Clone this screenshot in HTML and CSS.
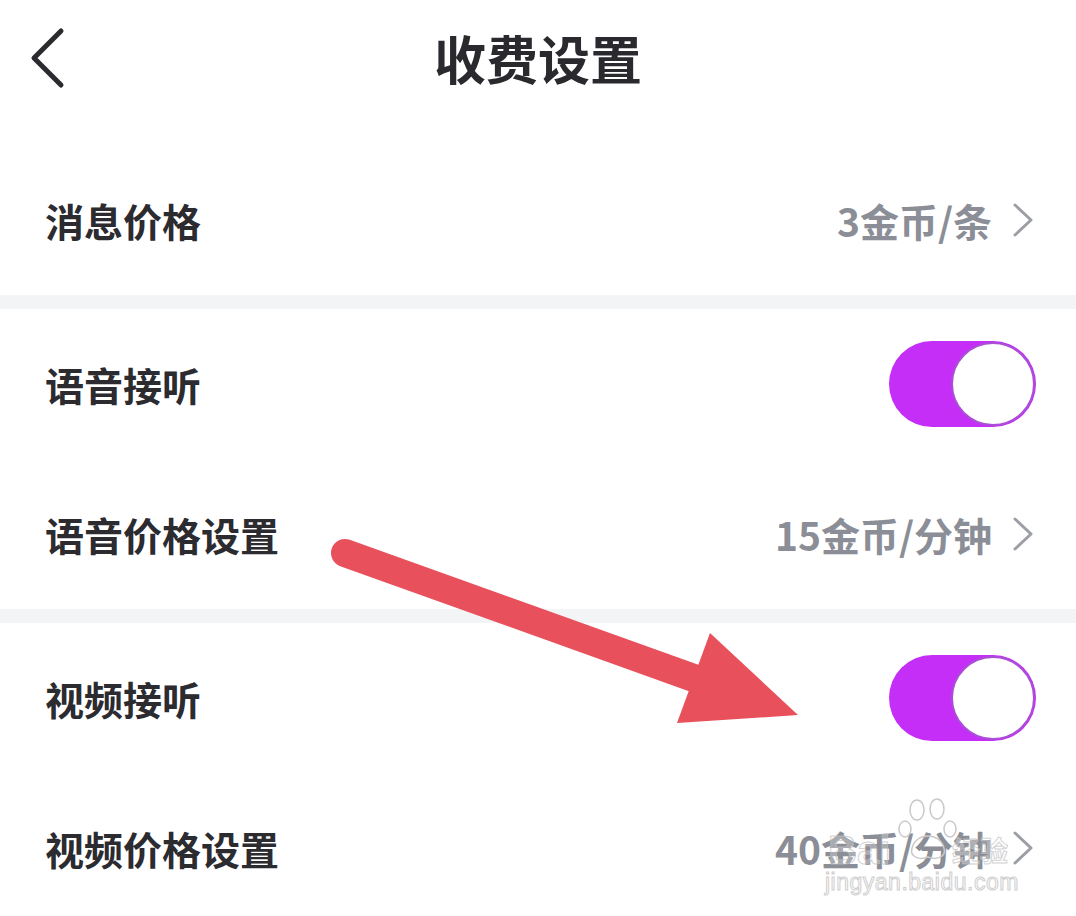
FILE: index.html
```html
<!DOCTYPE html>
<html lang="zh-CN">
<head>
<meta charset="utf-8">
<title>收费设置</title>
<link rel="stylesheet" href="styles.css">
</head>
<body>
<div class="page">
  <header class="topbar">
    <div class="back">
      <svg width="40" height="64" viewBox="0 0 40 64" aria-hidden="true">
        <polyline points="31,5 4,32 31,59" fill="none" stroke="#2b2b2f" stroke-width="5" stroke-linecap="round" stroke-linejoin="round"/>
      </svg>
    </div>
    <h1 class="title">收费设置</h1>
    <div></div>
  </header>

  <section class="group">
    <div class="row">
      <span class="label">消息价格</span>
      <span class="value">3金币/条<svg class="chev" width="22" height="36" viewBox="0 0 22 36"><polyline points="3,3 19,18 3,33" fill="none" stroke="#9c9ea5" stroke-width="3" stroke-linecap="round" stroke-linejoin="round"/></svg></span>
    </div>
  </section>
  <div class="divider"></div>

  <section class="group">
    <div class="row">
      <span class="label">语音接听</span>
      <span class="toggle"><span class="knob"></span></span>
    </div>
    <div class="row">
      <span class="label">语音价格设置</span>
      <span class="value">15金币/分钟<svg class="chev" width="22" height="36" viewBox="0 0 22 36"><polyline points="3,3 19,18 3,33" fill="none" stroke="#9c9ea5" stroke-width="3" stroke-linecap="round" stroke-linejoin="round"/></svg></span>
    </div>
  </section>
  <div class="divider"></div>

  <section class="group">
    <div class="row">
      <span class="label">视频接听</span>
      <span class="toggle"><span class="knob"></span></span>
    </div>
    <div class="row">
      <span class="label">视频价格设置</span>
      <span class="value">40金币/分钟<svg class="chev" width="22" height="36" viewBox="0 0 22 36"><polyline points="3,3 19,18 3,33" fill="none" stroke="#9c9ea5" stroke-width="3" stroke-linecap="round" stroke-linejoin="round"/></svg></span>
    </div>
  </section>

  <svg class="annot" width="1076" height="916" viewBox="0 0 1076 916" aria-hidden="true">
    <line x1="345" y1="553" x2="702" y2="681" stroke="#e8505c" stroke-width="28" stroke-linecap="round"/>
    <polygon points="710,633 798,715 677,723" fill="#e8505c"/>
  </svg>

  <div class="watermark">
    <svg class="paw" width="140" height="80" viewBox="0 0 140 80" aria-hidden="true">
      <g fill="none" stroke="#c9c9c9" stroke-width="1.5">
        <ellipse cx="57" cy="14" rx="7" ry="10"/>
        <ellipse cx="77" cy="13" rx="7" ry="10"/>
        <ellipse cx="45" cy="33" rx="6" ry="8"/>
        <ellipse cx="90" cy="33" rx="6" ry="8"/>
        <path d="M52 52 C56 36 80 36 84 52 C87 62 75 64 68 61 C61 64 49 62 52 52 Z"/>
      </g>
    </svg>
    <span class="wm-bai">Bai</span>
    <span class="wm-jy">经验</span>
    <span class="wm-url">jingyan.baidu.com</span>
  </div>
</div>
</body>
</html>
```

FILE: styles.css
```css
* { box-sizing: border-box; }

html, body {
  margin: 0;
  padding: 0;
  background: #ffffff;
}

body {
  font-family: "Noto Sans CJK SC", "Noto Sans", Roboto, sans-serif;
  color: #2b2b30;
}

.page {
  position: relative;
  width: 1076px;
  height: 916px;
  overflow: hidden;
}

.topbar {
  display: grid;
  grid-template-columns: 1fr auto 1fr;
  align-items: center;
  height: 116px;
  margin-bottom: 29px;
}

.back {
  display: flex;
  align-items: center;
  padding-left: 30px;
}

.back svg { display: block; }

.title {
  margin: 0;
  font-size: 52px;
  font-weight: 700;
  line-height: 1;
  color: #2a2a2e;
}

.group {
  display: flex;
  flex-direction: column;
}

.row {
  height: 150px;
  display: flex;
  align-items: center;
  justify-content: space-between;
  padding: 0 40px 0 45px;
}

.label {
  font-size: 39px;
  font-weight: 700;
  color: #2b2b30;
  line-height: 1;
}

.value {
  display: flex;
  align-items: center;
  gap: 20px;
  font-size: 39px;
  font-weight: 700;
  color: #8b8e96;
  line-height: 1;
}

.chev {
  display: block;
  margin-right: 2px;
}

.divider {
  height: 14px;
  background: #f3f4f6;
}

.toggle {
  width: 147px;
  height: 86px;
  border-radius: 43px;
  background: #c52ef7;
  display: flex;
  align-items: center;
  justify-content: flex-end;
  padding-right: 1px;
}

.knob {
  width: 84px;
  height: 84px;
  border-radius: 50%;
  background: #ffffff;
  border: 2px solid #a94fd6;
}

.annot {
  position: absolute;
  left: 0;
  top: 0;
  pointer-events: none;
}

.watermark {
  position: absolute;
  left: 820px;
  top: 796px;
  width: 220px;
  height: 100px;
  pointer-events: none;
}

.paw {
  position: absolute;
  left: 40px;
  top: 0;
}

.wm-bai {
  position: absolute;
  left: 8px;
  top: 34px;
  line-height: 1;
  font-family: "Liberation Sans", Arial, sans-serif;
  font-size: 40px;
  font-weight: 700;
  color: rgba(255, 255, 255, 0.25);
  -webkit-text-stroke: 1px rgba(190, 190, 190, 0.7);
}

.wm-jy {
  position: absolute;
  left: 132px;
  top: 40px;
  line-height: 1;
  font-size: 28px;
  font-weight: 700;
  color: rgba(255, 255, 255, 0.3);
  -webkit-text-stroke: 1px rgba(190, 190, 190, 0.7);
}

.wm-url {
  position: absolute;
  left: 5px;
  top: 75px;
  line-height: 1;
  font-family: "Liberation Sans", Arial, sans-serif;
  font-size: 23px;
  letter-spacing: 0.5px;
  color: rgba(255, 255, 255, 0.4);
  -webkit-text-stroke: 1px #cfcfcf;
}
```
